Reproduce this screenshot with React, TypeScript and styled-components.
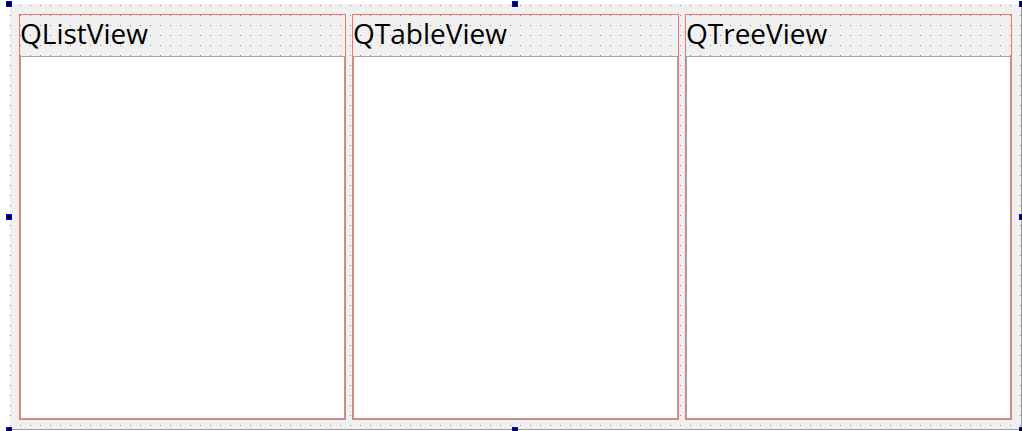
import styled, { createGlobalStyle } from "styled-components";

const GlobalStyle = createGlobalStyle`
  html, body {
    margin: 0;
    padding: 0;
    background: #ffffff;
    overflow: hidden;
  }
`;

const Canvas = styled.div`
  position: relative;
  width: 1022px;
  height: 431px;
  padding: 4px 0 0 10px;
  box-sizing: border-box;
`;

const Form = styled.div`
  box-sizing: border-box;
  width: 1012px;
  height: 426px;
  border-right: 1px solid #a0a0a0;
  border-bottom: 1px solid #a0a0a0;
  padding: 10px 9px 9px 9px;
  background-color: #f0f0f0;
  background-image: conic-gradient(from 270deg at 1px 1px, #8a8a8a 90deg, transparent 0);
  background-size: 10px 10px;
  background-position: 0 1px;
  display: grid;
  grid-template-columns: repeat(3, 327px);
  gap: 6px;
`;

const LayoutBox = styled.div`
  border: 1px solid #f27575;
  display: flex;
  flex-direction: column;
  min-height: 0;
`;

const Label = styled.div`
  height: 41px;
  flex: none;
  display: flex;
  align-items: center;
  padding-bottom: 5px;
  box-sizing: border-box;
  font-family: "Open Sans", "Noto Sans", sans-serif;
  font-size: 28px;
  color: #000000;
`;

const ItemView = styled.div`
  flex: 1;
  background: #ffffff;
  border: 1px solid #a5a5a5;
`;

const Handle = styled.div<{ $x: number; $y: number }>`
  position: absolute;
  left: ${(p) => p.$x}px;
  top: ${(p) => p.$y}px;
  width: 6px;
  height: 6px;
  box-sizing: border-box;
  border: 1px solid #0000ff;
  background: #000000;
`;

const views = ["QListView", "QTableView", "QTreeView"];

const handles = [
  [6, 1],
  [512, 1],
  [1019, 1],
  [6, 214],
  [1019, 214],
  [6, 427],
  [512, 427],
  [1019, 427],
];

const App = () => {
  return (
    <>
      <GlobalStyle />
      <Canvas>
        <Form>
          {views.map((name) => (
            <LayoutBox key={name}>
              <Label>{name}</Label>
              <ItemView />
            </LayoutBox>
          ))}
        </Form>
        {handles.map(([x, y]) => (
          <Handle key={`${x}-${y}`} $x={x} $y={y} />
        ))}
      </Canvas>
    </>
  );
};

export default App;
